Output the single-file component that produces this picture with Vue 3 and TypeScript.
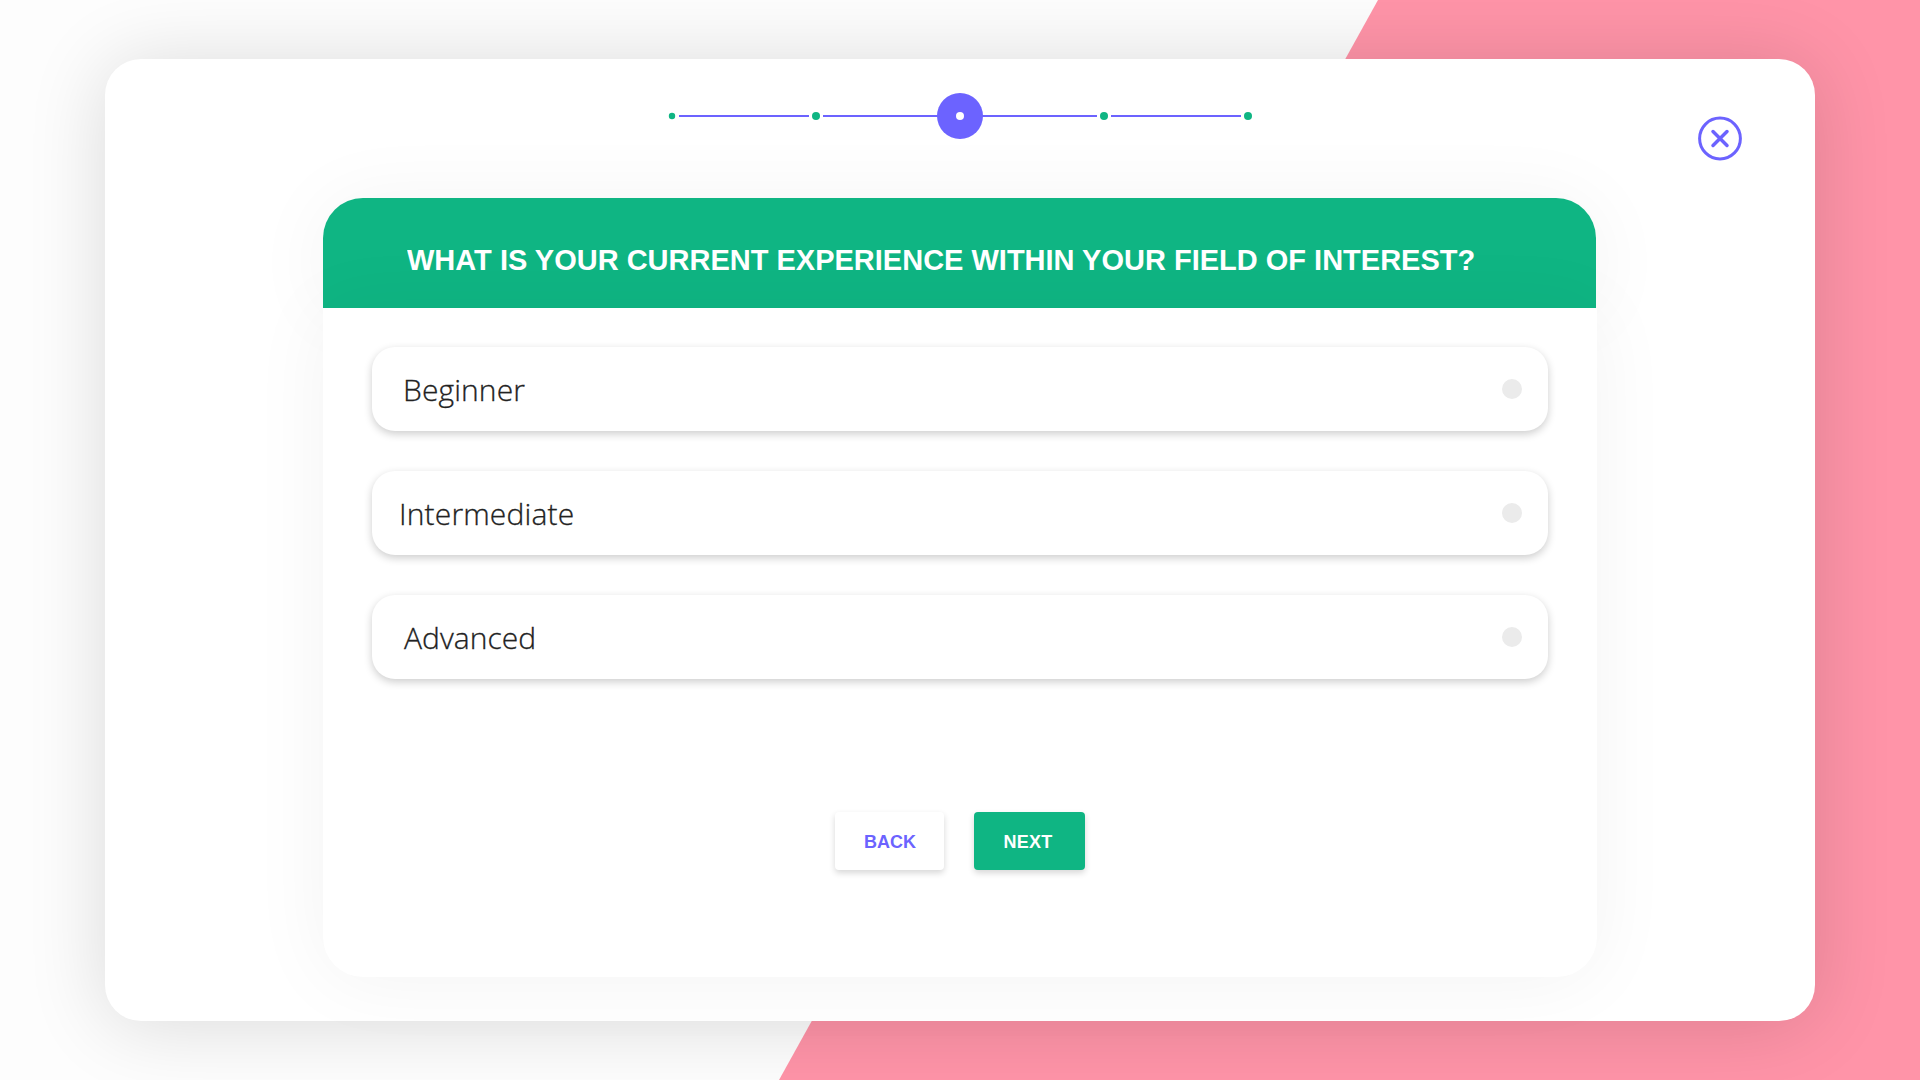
<script setup lang="ts">
import { ref } from 'vue'

interface Level {
  label: string
  indent: number
  spacing: number
}

const levels: Level[] = [
  { label: 'Beginner', indent: 31, spacing: 0.1 },
  { label: 'Intermediate', indent: 27, spacing: 0.15 },
  { label: 'Advanced', indent: 32, spacing: 0.05 },
]
const selected = ref<string | null>(null)
</script>

<template>
  <main class="page">
    <svg class="backdrop" viewBox="0 0 1920 1080" aria-hidden="true">
      <polygon points="1378,0 1920,0 1920,1080 779,1080" fill="#ff94a8" />
    </svg>
    <section class="modal">
      <svg class="stepper" width="590" height="46" viewBox="665 0 590 46" aria-hidden="true">
        <g stroke="#6c63ff" stroke-width="2">
          <path d="M679 23H809M823 23H940M980 23H1097M1111 23H1241" />
        </g>
        <circle cx="960" cy="23" r="23" fill="#6c63ff" />
        <circle cx="960" cy="23" r="4" fill="#fff" />
        <g fill="#0fb583">
          <circle cx="672" cy="23" r="3.2" />
          <circle cx="816" cy="23" r="4" />
          <circle cx="1104" cy="23" r="4" />
          <circle cx="1248" cy="23" r="4" />
        </g>
      </svg>
      <button class="close" type="button" aria-label="Close">
        <svg width="46" height="46" viewBox="0 0 46 46" fill="none" stroke="#6c63ff" stroke-width="3" stroke-linecap="round">
          <circle cx="23" cy="23.5" r="20.4" />
          <path d="M16 16.5L30 30.5M30 16.5L16 30.5" stroke-width="3.5" />
        </svg>
      </button>
      <div class="card">
        <header class="head">
          <h1>WHAT IS YOUR CURRENT EXPERIENCE WITHIN YOUR FIELD OF INTEREST?</h1>
        </header>
        <div class="body">
          <div class="options">
            <div
              v-for="level in levels"
              :key="level.label"
              class="option"
              :style="{ paddingLeft: level.indent + 'px', letterSpacing: level.spacing + 'px' }"
              @click="selected = level.label"
            >
              <span class="label">{{ level.label }}</span>
              <span class="radio" :class="{ on: selected === level.label }"></span>
            </div>
          </div>
          <div class="actions">
            <button class="btn back" type="button">BACK</button>
            <button class="btn next" type="button">NEXT</button>
          </div>
        </div>
      </div>
    </section>
  </main>
</template>

<style>
body {
  margin: 0;
}
</style>

<style scoped>
.page {
  position: relative;
  box-sizing: border-box;
  width: 1920px;
  height: 1080px;
  padding: 59px 105px;
  overflow: hidden;
  background: #fdfdfd;
  font-family: 'Liberation Sans', Arial, sans-serif;
}
.backdrop {
  position: absolute;
  inset: 0;
  width: 1920px;
  height: 1080px;
}
.modal {
  position: relative;
  box-sizing: border-box;
  width: 1710px;
  height: 962px;
  padding-top: 34px;
  border-radius: 36px;
  background: #fff;
  box-shadow: 0 4px 80px rgba(0, 0, 0, 0.14);
  display: flex;
  flex-direction: column;
  align-items: center;
}
.stepper {
  display: block;
  flex: none;
}
.close {
  position: absolute;
  top: 56px;
  right: 72px;
  width: 46px;
  height: 46px;
  padding: 0;
  border: 0;
  background: none;
}
.close svg {
  display: block;
}
.card {
  width: 1274px;
  margin-top: 59px;
}
.head {
  box-sizing: border-box;
  width: 1273px;
  height: 110px;
  padding: 45px 0 0 84px;
  border-radius: 40px 40px 0 0;
  background: #0fb583;
  box-shadow: 0 3px 80px rgba(0, 0, 0, 0.05);
}
h1 {
  margin: 0;
  color: #fff;
  font-size: 29px;
  line-height: 34px;
  font-weight: 700;
  white-space: nowrap;
  transform: scaleY(1.04);
  transform-origin: 0 27px;
}
.body {
  box-sizing: border-box;
  height: 669px;
  padding: 39px 49px 0;
  border-radius: 0 0 40px 40px;
  background: #fff;
  box-shadow: 0 3px 80px rgba(0, 0, 0, 0.05);
}
.options {
  display: flex;
  flex-direction: column;
  gap: 40px;
}
.option {
  box-sizing: border-box;
  height: 84px;
  padding-right: 26px;
  border-radius: 23px;
  background: #fff;
  box-shadow: 0 3px 9px rgba(0, 0, 0, 0.2);
  display: flex;
  align-items: center;
  justify-content: space-between;
}
.label {
  padding-top: 2px;
  color: #222;
  font: 300 30px/40px 'Open Sans', sans-serif;
  -webkit-text-stroke: 0.3px #222;
}
.radio {
  width: 20px;
  height: 20px;
  border-radius: 50%;
  background: #ebebeb;
}
.radio.on {
  background: #6c63ff;
}
.actions {
  display: flex;
  gap: 30px;
  margin: 133px 0 0 463px;
}
.btn {
  height: 58px;
  padding: 2px 0 0;
  border: 0;
  border-radius: 4px;
  font: 700 18px/20px 'Liberation Sans', Arial, sans-serif;
  box-shadow: 0 3px 6px rgba(0, 0, 0, 0.16);
}
.back {
  width: 109px;
  padding-left: 1px;
  background: #fff;
  color: #6c63ff;
}
.next {
  width: 111px;
  padding-right: 3px;
  letter-spacing: 0.2px;
  background: #0fb583;
  color: #fff;
}
</style>
